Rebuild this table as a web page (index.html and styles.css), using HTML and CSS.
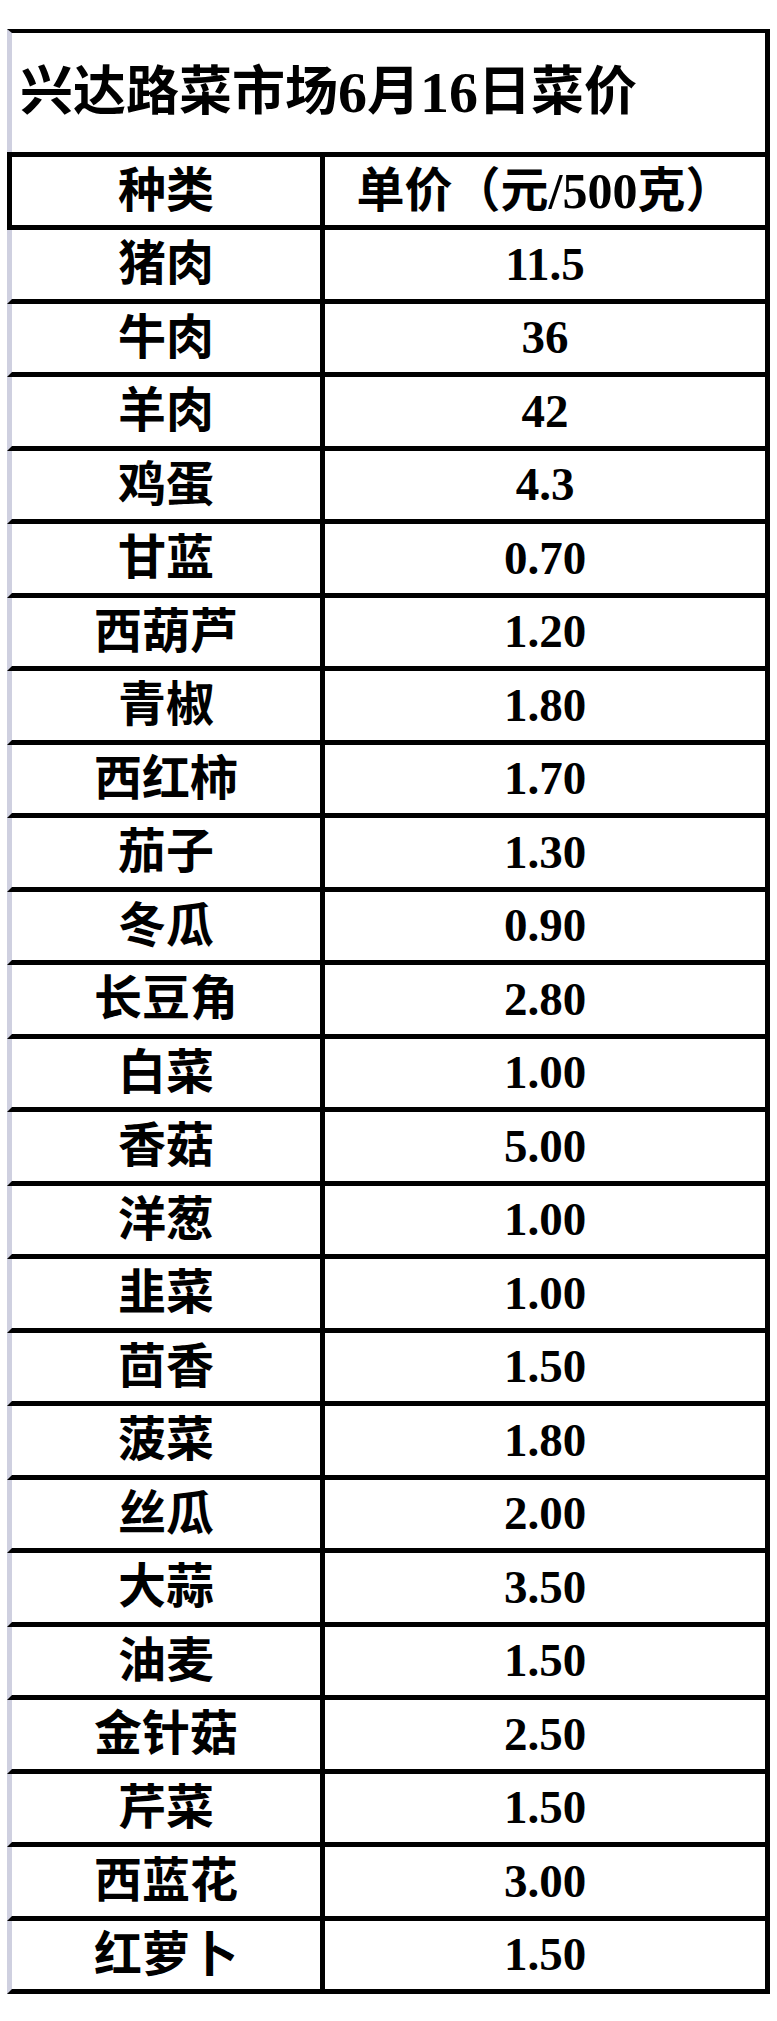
FILE: index.html
```html
<!DOCTYPE html>
<html lang="zh-CN">
<head>
<meta charset="utf-8">
<title>兴达路菜市场6月16日菜价</title>
<link rel="stylesheet" href="styles.css">
</head>
<body>
<div class="sheet">
  <div class="title">兴达路菜市场<span class="tnum">6</span>月<span class="tnum">16</span>日菜价</div>
  <div class="row head">
    <div class="cell name">种类</div>
    <div class="cell price">单价（元<span class="hnum">/500</span>克）</div>
  </div>
  <div class="row"><div class="cell name">猪肉</div><div class="cell price">11.5</div></div>
  <div class="row"><div class="cell name">牛肉</div><div class="cell price">36</div></div>
  <div class="row"><div class="cell name">羊肉</div><div class="cell price">42</div></div>
  <div class="row"><div class="cell name">鸡蛋</div><div class="cell price">4.3</div></div>
  <div class="row"><div class="cell name">甘蓝</div><div class="cell price">0.70</div></div>
  <div class="row"><div class="cell name">西葫芦</div><div class="cell price">1.20</div></div>
  <div class="row"><div class="cell name">青椒</div><div class="cell price">1.80</div></div>
  <div class="row"><div class="cell name">西红柿</div><div class="cell price">1.70</div></div>
  <div class="row"><div class="cell name">茄子</div><div class="cell price">1.30</div></div>
  <div class="row"><div class="cell name">冬瓜</div><div class="cell price">0.90</div></div>
  <div class="row"><div class="cell name">长豆角</div><div class="cell price">2.80</div></div>
  <div class="row"><div class="cell name">白菜</div><div class="cell price">1.00</div></div>
  <div class="row"><div class="cell name">香菇</div><div class="cell price">5.00</div></div>
  <div class="row"><div class="cell name">洋葱</div><div class="cell price">1.00</div></div>
  <div class="row"><div class="cell name">韭菜</div><div class="cell price">1.00</div></div>
  <div class="row"><div class="cell name">茴香</div><div class="cell price">1.50</div></div>
  <div class="row"><div class="cell name">菠菜</div><div class="cell price">1.80</div></div>
  <div class="row"><div class="cell name">丝瓜</div><div class="cell price">2.00</div></div>
  <div class="row"><div class="cell name">大蒜</div><div class="cell price">3.50</div></div>
  <div class="row"><div class="cell name">油麦</div><div class="cell price">1.50</div></div>
  <div class="row"><div class="cell name">金针菇</div><div class="cell price">2.50</div></div>
  <div class="row"><div class="cell name">芹菜</div><div class="cell price">1.50</div></div>
  <div class="row"><div class="cell name">西蓝花</div><div class="cell price">3.00</div></div>
  <div class="row"><div class="cell name">红萝卜</div><div class="cell price">1.50</div></div>
</div>
</body>
</html>
```
FILE: styles.css
```css
html, body {
  margin: 0;
  padding: 0;
  background: #ffffff;
}

body {
  font-family: "Liberation Serif", "Noto Sans CJK SC", serif;
  font-weight: 700;
  color: #000000;
}

.sheet {
  margin: 29px 0 0 7px;
  width: 763px;
}

.title {
  height: 119px;
  border-top: 4px solid #000;
  border-right: 5px solid #000;
  border-left: 5px solid #cfd0e0;
  display: flex;
  align-items: center;
  padding-left: 8px;
  font-size: 53px;
  line-height: 1;
  letter-spacing: 0;
}

.tnum {
  font-size: 58px;
}

.row {
  display: flex;
  height: 68.5px;
  border-bottom: 5px solid #000;
  border-right: 5px solid #000;
  border-left: 5px solid #cfd0e0;
}

.row.head {
  height: 68px;
  border-top: 5px solid #000;
  border-left-color: #000;
}

.cell {
  display: flex;
  align-items: center;
  justify-content: center;
  line-height: 1;
}

.name {
  width: 308px;
  border-right: 5px solid #000;
  font-size: 48px;
}

.price {
  flex: 1;
  font-size: 47px;
}

.head .price {
  font-size: 48px;
}

.hnum {
  font-size: 50px;
}
```
